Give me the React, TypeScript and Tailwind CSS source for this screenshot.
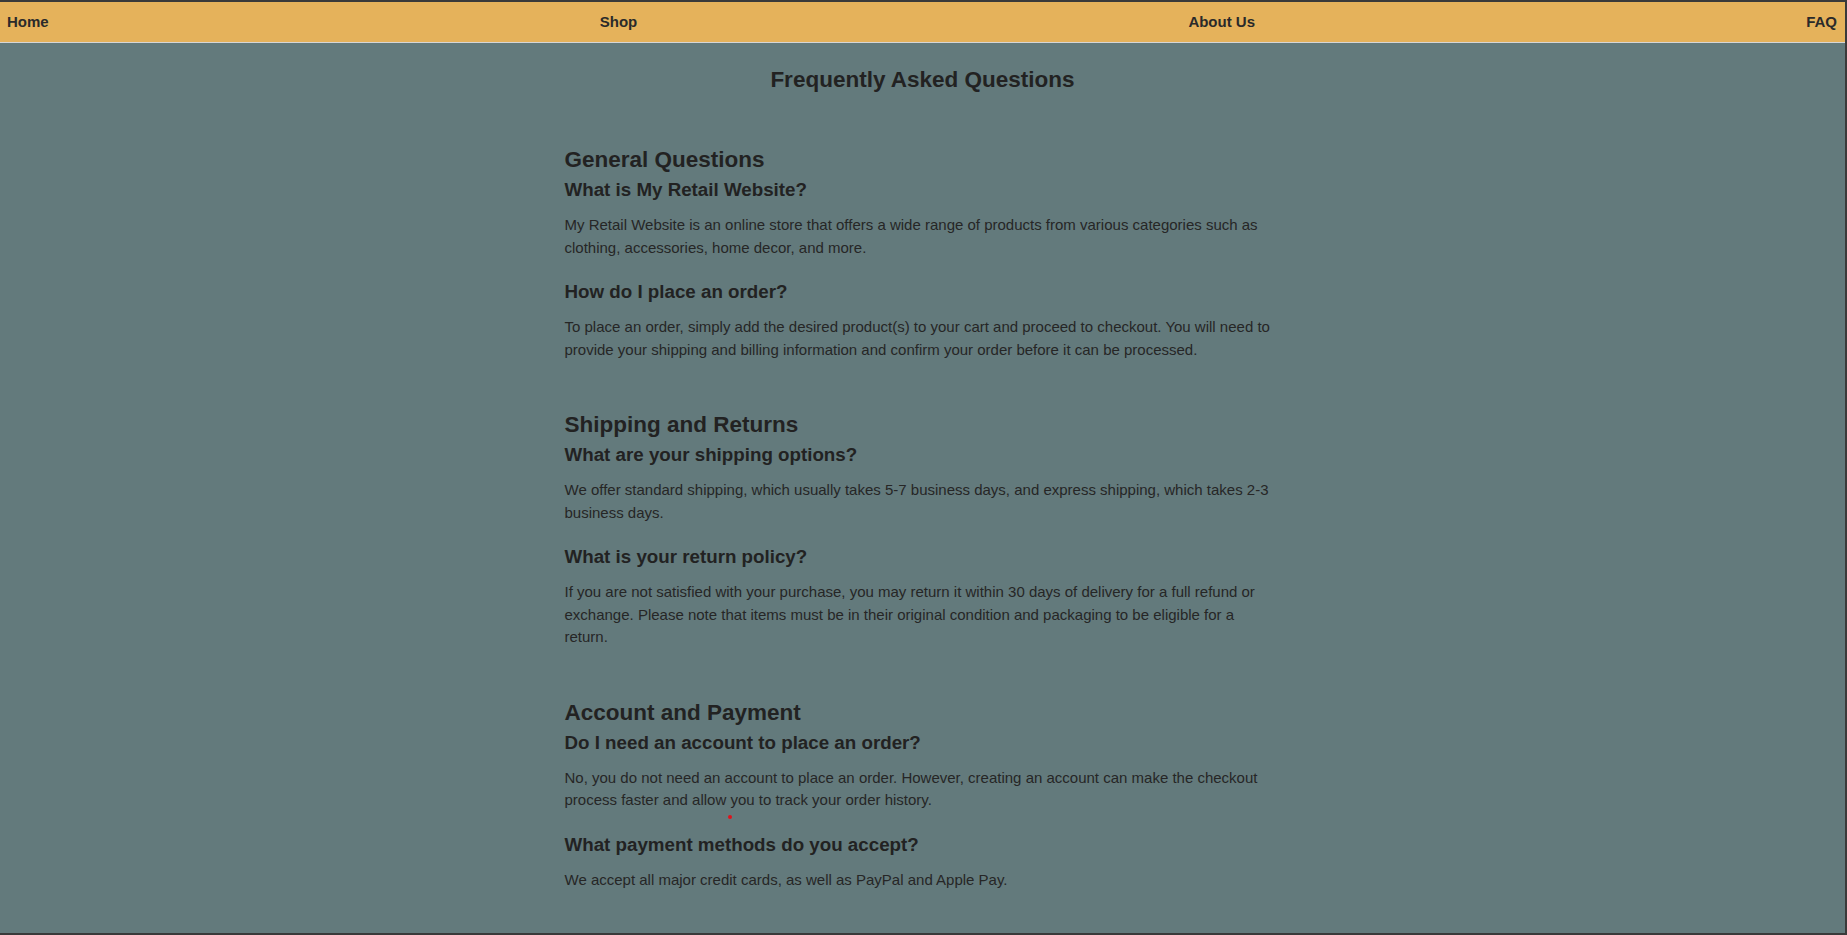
import React from "react";

type Faq = {
  q: string;
  a: string;
};

type Section = {
  title: string;
  items: Faq[];
};

const sections: Section[] = [
  {
    title: "General Questions",
    items: [
      {
        q: "What is My Retail Website?",
        a: "My Retail Website is an online store that offers a wide range of products from various categories such as clothing, accessories, home decor, and more.",
      },
      {
        q: "How do I place an order?",
        a: "To place an order, simply add the desired product(s) to your cart and proceed to checkout. You will need to provide your shipping and billing information and confirm your order before it can be processed.",
      },
    ],
  },
  {
    title: "Shipping and Returns",
    items: [
      {
        q: "What are your shipping options?",
        a: "We offer standard shipping, which usually takes 5-7 business days, and express shipping, which takes 2-3 business days.",
      },
      {
        q: "What is your return policy?",
        a: "If you are not satisfied with your purchase, you may return it within 30 days of delivery for a full refund or exchange. Please note that items must be in their original condition and packaging to be eligible for a return.",
      },
    ],
  },
  {
    title: "Account and Payment",
    items: [
      {
        q: "Do I need an account to place an order?",
        a: "No, you do not need an account to place an order. However, creating an account can make the checkout process faster and allow you to track your order history.",
      },
      {
        q: "What payment methods do you accept?",
        a: "We accept all major credit cards, as well as PayPal and Apple Pay.",
      },
    ],
  },
];

const links = ["Home", "Shop", "About Us", "FAQ"];

export default function App() {
  return (
    <div className="relative h-[935px] overflow-hidden border-t-2 border-r-2 border-b-2 border-[#3a3a3a] bg-[#637a7c] font-['Liberation_Sans',Arial,sans-serif] text-[#222]">
      <nav className="flex h-[41px] items-center justify-between border-b border-[#d6d6d6] bg-[#e5b25b] pl-[7px] pr-2">
        {links.map((link) => (
          <a key={link} href="#" className="text-[15px] font-bold text-[#2a2a2a]">
            {link}
          </a>
        ))}
      </nav>

      <main className="mx-auto w-[716px]">
        <h1 className="mt-[24px] mb-[54px] text-center text-[22.5px] leading-[26px] font-bold">
          Frequently Asked Questions
        </h1>

        {sections.map((section) => (
          <section key={section.title} className="mb-[51px]">
            <h2 className="mb-[6px] text-[22.5px] leading-[26px] font-bold">
              {section.title}
            </h2>
            {section.items.map((item) => (
              <div key={item.q}>
                <h3 className="mb-[13px] text-[18.75px] leading-[22px] font-bold">
                  {item.q}
                </h3>
                <p className="mb-[22px] text-[15px] leading-[22.5px] text-[#262626]">
                  {item.a}
                </p>
              </div>
            ))}
          </section>
        ))}
      </main>

      <span className="absolute top-[813px] left-[728px] h-[4px] w-[4px] rounded-full bg-[#e0121b]" />
    </div>
  );
}
